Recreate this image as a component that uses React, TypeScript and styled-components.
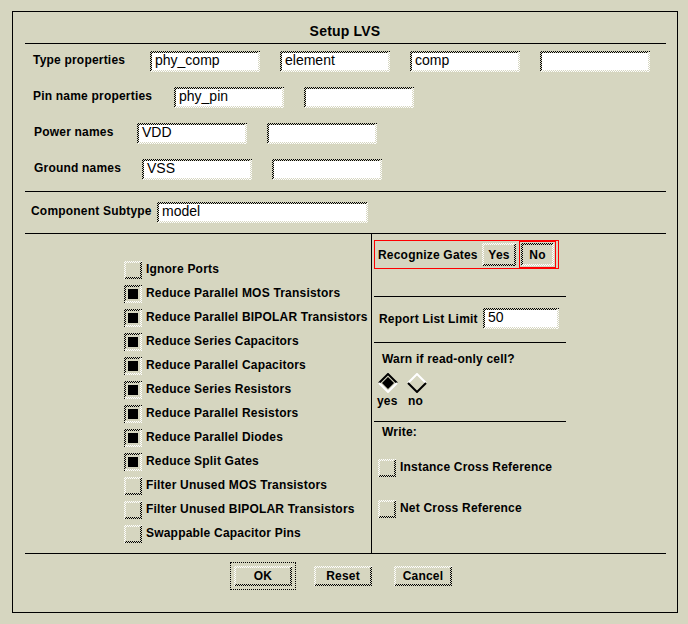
import React from 'react';
import styled, { createGlobalStyle, css } from 'styled-components';

const BG = '#d6d6c0';
const DARK = `repeating-conic-gradient(#000 0 25%, ${BG} 0 50%)`;
const LIGHT = `repeating-conic-gradient(#fff 0 25%, ${BG} 0 50%)`;

const bevel = (sunken: boolean, fill: string) => css`
  position: relative;
  box-sizing: border-box;
  border: 2px solid transparent;
  background: linear-gradient(${fill}, ${fill}) padding-box, ${sunken ? DARK : LIGHT} border-box;
  background-size: auto, 2px 2px;
  &::before,
  &::after {
    content: '';
    position: absolute;
    background: ${sunken ? LIGHT : DARK};
    background-size: 2px 2px;
  }
  &::before {
    left: -1px;
    right: -2px;
    bottom: -2px;
    height: 2px;
  }
  &::after {
    top: -1px;
    bottom: -2px;
    right: -2px;
    width: 2px;
  }
`;

const Global = createGlobalStyle`
  html, body {
    margin: 0;
    padding: 0;
    background: ${BG};
  }
  body {
    font-family: "Liberation Sans", Arial, sans-serif;
    color: #000;
    width: 688px;
    height: 624px;
    overflow: hidden;
  }
`;

const Frame = styled.div`
  margin: 11px 0 0 12px;
  width: 666px;
  height: 602px;
  box-sizing: border-box;
  border: 1px solid #000;
  display: flex;
  flex-direction: column;
`;

const Title = styled.div`
  height: 31px;
  box-sizing: border-box;
  padding-top: 11px;
  text-align: center;
  font-weight: bold;
  font-size: 14px;
  line-height: 16px;
  letter-spacing: 0.2px;
`;

const Rule = styled.div`
  height: 1px;
  flex-shrink: 0;
  background: #000;
  margin: 0 11px 0 12px;
`;

const PropSection = styled.div`
  display: flex;
  flex-direction: column;
  gap: 15px;
  padding: 7px 0 11px;
`;

const SubtypeSection = styled.div`
  padding: 10px 0;
`;

const PropRow = styled.div<{ $indent: number }>`
  display: flex;
  align-items: center;
  height: 21px;
  padding-left: ${(p) => p.$indent}px;
`;

const Label = styled.span<{ $w?: number; $lift?: number }>`
  ${(p) => (p.$w ? `width: ${p.$w}px; flex-shrink: 0;` : '')}
  font-weight: bold;
  font-size: 12px;
  letter-spacing: 0.2px;
  line-height: 14px;
  padding-bottom: ${(p) => p.$lift ?? 3}px;
  white-space: nowrap;
`;

const Fields = styled.div`
  display: flex;
  gap: 20px;
`;

const Field = styled.div<{ $w: number }>`
  ${bevel(true, '#fff')}
  width: ${(p) => p.$w}px;
  height: 21px;
  padding: 0 3px;
  font-size: 14px;
  line-height: 14px;
  white-space: nowrap;
`;

const Lower = styled.div`
  display: flex;
  height: 319px;
  flex-shrink: 0;
`;

const LeftCol = styled.div`
  width: 358px;
  box-sizing: border-box;
  padding: 24px 0 0 111px;
  display: flex;
  flex-direction: column;
`;

const Divider = styled.div`
  width: 1px;
  background: #000;
`;

const RightCol = styled.div`
  flex: 1;
  padding: 6px 0 0 2px;
  display: flex;
  flex-direction: column;
  align-items: flex-start;
`;

const CheckRow = styled.div<{ $h: number; $mt?: number; $pl?: number }>`
  display: flex;
  align-items: center;
  gap: 4px;
  height: ${(p) => p.$h}px;
  margin-top: ${(p) => p.$mt ?? 0}px;
  padding-left: ${(p) => p.$pl ?? 0}px;
`;

const Box = styled.div<{ $checked: boolean }>`
  ${(p) => bevel(p.$checked, BG)}
  width: 18px;
  height: 18px;
  flex-shrink: 0;
  display: flex;
  align-items: center;
  justify-content: center;
`;

const Mark = styled.div`
  width: 10px;
  height: 10px;
  background: #000;
`;

const CheckLabel = styled.span`
  font-weight: bold;
  font-size: 12px;
  letter-spacing: 0.2px;
  line-height: 14px;
  padding-bottom: 2px;
  white-space: nowrap;
`;

const GateBox = styled.div`
  display: flex;
  align-items: center;
  height: 29px;
  box-sizing: border-box;
  border: 1px solid #ff0000;
  padding: 0 2px 0 3px;
`;

const NoWrap = styled.div`
  align-self: stretch;
  margin-left: 3px;
  width: 37px;
  box-sizing: border-box;
  border: 1px solid #ff0000;
  padding: 1px;
  display: flex;
`;

const Button = styled.div<{ $w: number; $h: number; $sunken?: boolean; $focus?: boolean }>`
  ${(p) => bevel(!!p.$sunken, BG)}
  width: ${(p) => p.$w}px;
  height: ${(p) => p.$h}px;
  flex-shrink: 0;
  display: flex;
  align-items: center;
  justify-content: center;
  font-weight: bold;
  font-size: 12px;
  letter-spacing: 0.2px;
  line-height: 14px;
  ${(p) =>
    p.$focus &&
    css`
      outline: 1px dotted #000;
      outline-offset: 3px;
    `}
`;

const GroupRule = styled.div<{ $mt: number }>`
  width: 192px;
  height: 1px;
  background: #000;
  margin-top: ${(p) => p.$mt}px;
  flex-shrink: 0;
`;

const ReportRow = styled.div`
  margin-top: 11px;
  padding-left: 5px;
  display: flex;
  align-items: center;
  height: 21px;
`;

const Caption = styled.div<{ $mt: number; $pl: number }>`
  margin-top: ${(p) => p.$mt}px;
  padding-left: ${(p) => p.$pl}px;
  font-weight: bold;
  font-size: 12px;
  letter-spacing: 0.2px;
  line-height: 14px;
  white-space: nowrap;
`;

const RadioGroup = styled.div`
  display: flex;
  gap: 9px;
  margin-top: 7px;
  padding-left: 4px;
`;

const RadioItem = styled.div`
  display: flex;
  flex-direction: column;
  align-items: flex-start;
`;

const RadioLabel = styled.span<{ $dx: number }>`
  margin-left: ${(p) => p.$dx}px;
  margin-top: 1px;
  font-weight: bold;
  font-size: 12px;
  letter-spacing: 0.2px;
  line-height: 14px;
`;

const ButtonRow = styled.div`
  display: flex;
  justify-content: center;
  gap: 22px;
  padding: 12px 4px 0 0;
`;

const Diamond: React.FC<{ on: boolean }> = ({ on }) => (
  <svg width="20" height="20" viewBox="0 0 20 20" style={{ display: 'block' }}>
    <path d="M1 10 L10 1 L19 10" fill="none" stroke={on ? '#000' : '#fff'} strokeWidth="2" />
    <path d="M1 10 L10 19 L19 10" fill="none" stroke={on ? '#fff' : '#000'} strokeWidth="2" />
    {on && <polygon points="10,4 16,10 10,16 4,10" fill="#000" />}
  </svg>
);

const Check: React.FC<{ checked: boolean; label: string; h: number; mt?: number; pl?: number }> = ({
  checked,
  label,
  h,
  mt,
  pl,
}) => (
  <CheckRow $h={h} $mt={mt} $pl={pl}>
    <Box $checked={checked}>{checked && <Mark />}</Box>
    <CheckLabel>{label}</CheckLabel>
  </CheckRow>
);

const propRows: { label: string; indent: number; labelW: number; values: string[] }[] = [
  { label: 'Type properties', indent: 20, labelW: 117, values: ['phy_comp', 'element', 'comp', ''] },
  { label: 'Pin name properties', indent: 20, labelW: 141, values: ['phy_pin', ''] },
  { label: 'Power names', indent: 21, labelW: 103, values: ['VDD', ''] },
  { label: 'Ground names', indent: 21, labelW: 108, values: ['VSS', ''] },
];

const options: [string, boolean][] = [
  ['Ignore Ports', false],
  ['Reduce Parallel MOS Transistors', true],
  ['Reduce Parallel BIPOLAR Transistors', true],
  ['Reduce Series Capacitors', true],
  ['Reduce Parallel Capacitors', true],
  ['Reduce Series Resistors', true],
  ['Reduce Parallel Resistors', true],
  ['Reduce Parallel Diodes', true],
  ['Reduce Split Gates', true],
  ['Filter Unused MOS Transistors', false],
  ['Filter Unused BIPOLAR Transistors', false],
  ['Swappable Capacitor Pins', false],
];

export default function App() {
  return (
    <>
      <Global />
      <Frame>
        <Title>Setup LVS</Title>
        <Rule />
        <PropSection>
          {propRows.map((r) => (
            <PropRow key={r.label} $indent={r.indent}>
              <Label $w={r.labelW}>{r.label}</Label>
              <Fields>
                {r.values.map((v, i) => (
                  <Field key={i} $w={110}>
                    {v}
                  </Field>
                ))}
              </Fields>
            </PropRow>
          ))}
        </PropSection>
        <Rule />
        <SubtypeSection>
          <PropRow $indent={18}>
            <Label $w={126}>Component Subtype</Label>
            <Field $w={211}>model</Field>
          </PropRow>
        </SubtypeSection>
        <Rule />
        <Lower>
          <LeftCol>
            {options.map(([label, on]) => (
              <Check key={label} label={label} checked={on} h={24} />
            ))}
          </LeftCol>
          <Divider />
          <RightCol>
            <GateBox>
              <Label $w={104} $lift={0}>
                Recognize Gates
              </Label>
              <Button $w={34} $h={23}>
                Yes
              </Button>
              <NoWrap>
                <Button $w={33} $h={23} $sunken>
                  No
                </Button>
              </NoWrap>
            </GateBox>
            <GroupRule $mt={27} />
            <ReportRow>
              <Label $w={104} $lift={0}>
                Report List Limit
              </Label>
              <Field $w={76}>50</Field>
            </ReportRow>
            <GroupRule $mt={13} />
            <Caption $mt={9} $pl={8}>
              Warn if read-only cell?
            </Caption>
            <RadioGroup>
              <RadioItem>
                <Diamond on />
                <RadioLabel $dx={-1}>yes</RadioLabel>
              </RadioItem>
              <RadioItem>
                <Diamond on={false} />
                <RadioLabel $dx={1}>no</RadioLabel>
              </RadioItem>
            </RadioGroup>
            <GroupRule $mt={13} />
            <Caption $mt={3} $pl={8}>
              Write:
            </Caption>
            <Check label="Instance Cross Reference" checked={false} h={18} mt={20} pl={4} />
            <Check label="Net Cross Reference" checked={false} h={18} mt={23} pl={4} />
          </RightCol>
        </Lower>
        <Rule />
        <ButtonRow>
          <Button $w={58} $h={20} $focus>
            OK
          </Button>
          <Button $w={58} $h={20}>
            Reset
          </Button>
          <Button $w={58} $h={20}>
            Cancel
          </Button>
        </ButtonRow>
      </Frame>
    </>
  );
}
